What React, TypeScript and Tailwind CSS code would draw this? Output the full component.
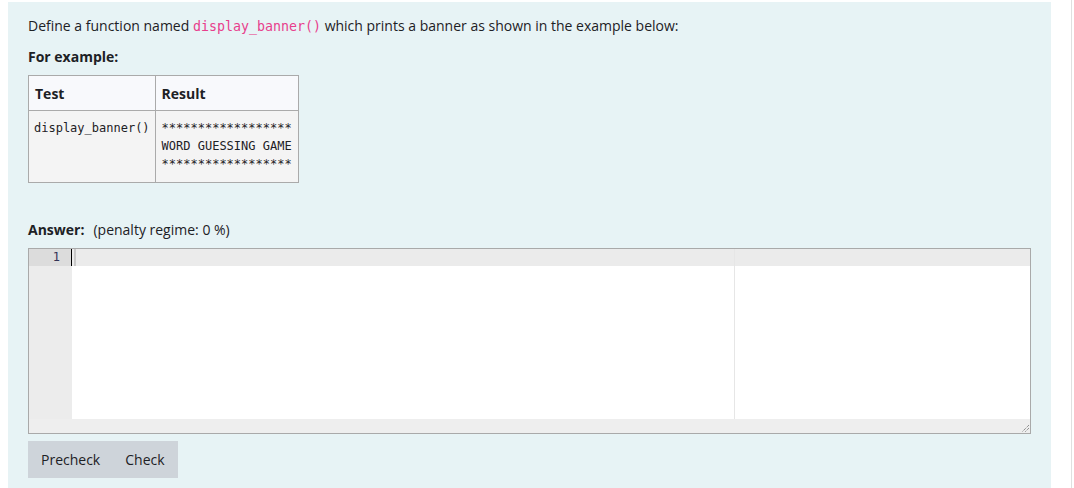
import React from "react";

const mono = "font-['DejaVu_Sans_Mono','Liberation_Mono',monospace]";

export default function App() {
  return (
    <div className="relative h-[488px] w-[1074px] overflow-hidden bg-white font-['Open_Sans','Noto_Sans',sans-serif] text-[#1d2125]">
      <div className="absolute right-[2px] top-0 h-full w-px bg-[#e0e0e0]" />
      <div className="ml-[8px] mt-[2px] h-[486px] w-[1043px] bg-[#e7f3f5] pl-[20px] pr-[21px] pt-[14px]">
        <p className="text-[14px] leading-[20px]">
          Define a function named{" "}
          <code className={`${mono} text-[13.3px] text-[#e83e8c]`}>display_banner()</code> which prints a banner as
          shown in the example below:
        </p>
        <p className="mt-[10px] text-[14px] font-bold leading-[20px]">For example:</p>
        <table className="mt-[8px] border-collapse text-left">
          <thead>
            <tr className="bg-[#f8f9fc]">
              <th className="h-[35px] border border-[#aaaaaa] px-[6px] text-[14px] font-bold">Test</th>
              <th className="h-[35px] border border-[#aaaaaa] px-[6px] text-[14px] font-bold">Result</th>
            </tr>
          </thead>
          <tbody>
            <tr className="bg-[#f4f4f4] align-top">
              <td className="border border-[#aaaaaa] px-[5px] pb-[9px] pt-[8px]">
                <pre className={`${mono} text-[12px] leading-[18px] text-[#1d2125]`}>display_banner()</pre>
              </td>
              <td className="border border-[#aaaaaa] px-[6px] pb-[9px] pt-[8px]">
                <pre className={`${mono} text-[12px] leading-[18px] text-[#1d2125]`}>
                  {"******************\nWORD GUESSING GAME\n******************"}
                </pre>
              </td>
            </tr>
          </tbody>
        </table>
        <div className="mt-[37px] flex items-center text-[14px] leading-[20px]">
          <span className="font-bold">Answer:</span>
          <span className="ml-[9px]">(penalty regime: 0 %)</span>
        </div>
        <div className="relative mt-[8px] flex h-[186px] w-[1003px] flex-col border border-[#a9a9a9] bg-white">
          <div className="flex flex-1">
            <div className="flex w-[43px] flex-col bg-[#ececec]">
              <div className={`${mono} h-[17px] bg-[#dcdcdc] pr-[12px] text-right text-[12px] leading-[17px] text-[#333355]`}>
                1
              </div>
            </div>
            <div className="relative flex-1">
              <div className="h-[17px] bg-[#ebebeb]" />
              <div className="absolute left-[-1px] top-0 h-[17px] w-px bg-black" />
              <div className="absolute left-[2px] top-0 h-[17px] w-[2px] bg-[#c8c8c8]" />
              <div className="absolute left-[662px] top-0 h-full w-px bg-[#e6e6e6]" />
            </div>
          </div>
          <div className="h-[14px] bg-[#eeeeee]" />
          <svg className="absolute bottom-0 right-0" width="10" height="10" viewBox="0 0 10 10">
            <path d="M9 2 L2 9 M9 5 L5 9" stroke="#666" strokeWidth="1" strokeDasharray="1 1" />
          </svg>
        </div>
        <div className="mt-[7px] flex w-fit bg-[#ced4da] text-[14px]">
          <button className="h-[37px] pl-[13px] pr-[12px]">Precheck</button>
          <button className="h-[37px] pl-[13px] pr-[13px]">Check</button>
        </div>
      </div>
    </div>
  );
}
